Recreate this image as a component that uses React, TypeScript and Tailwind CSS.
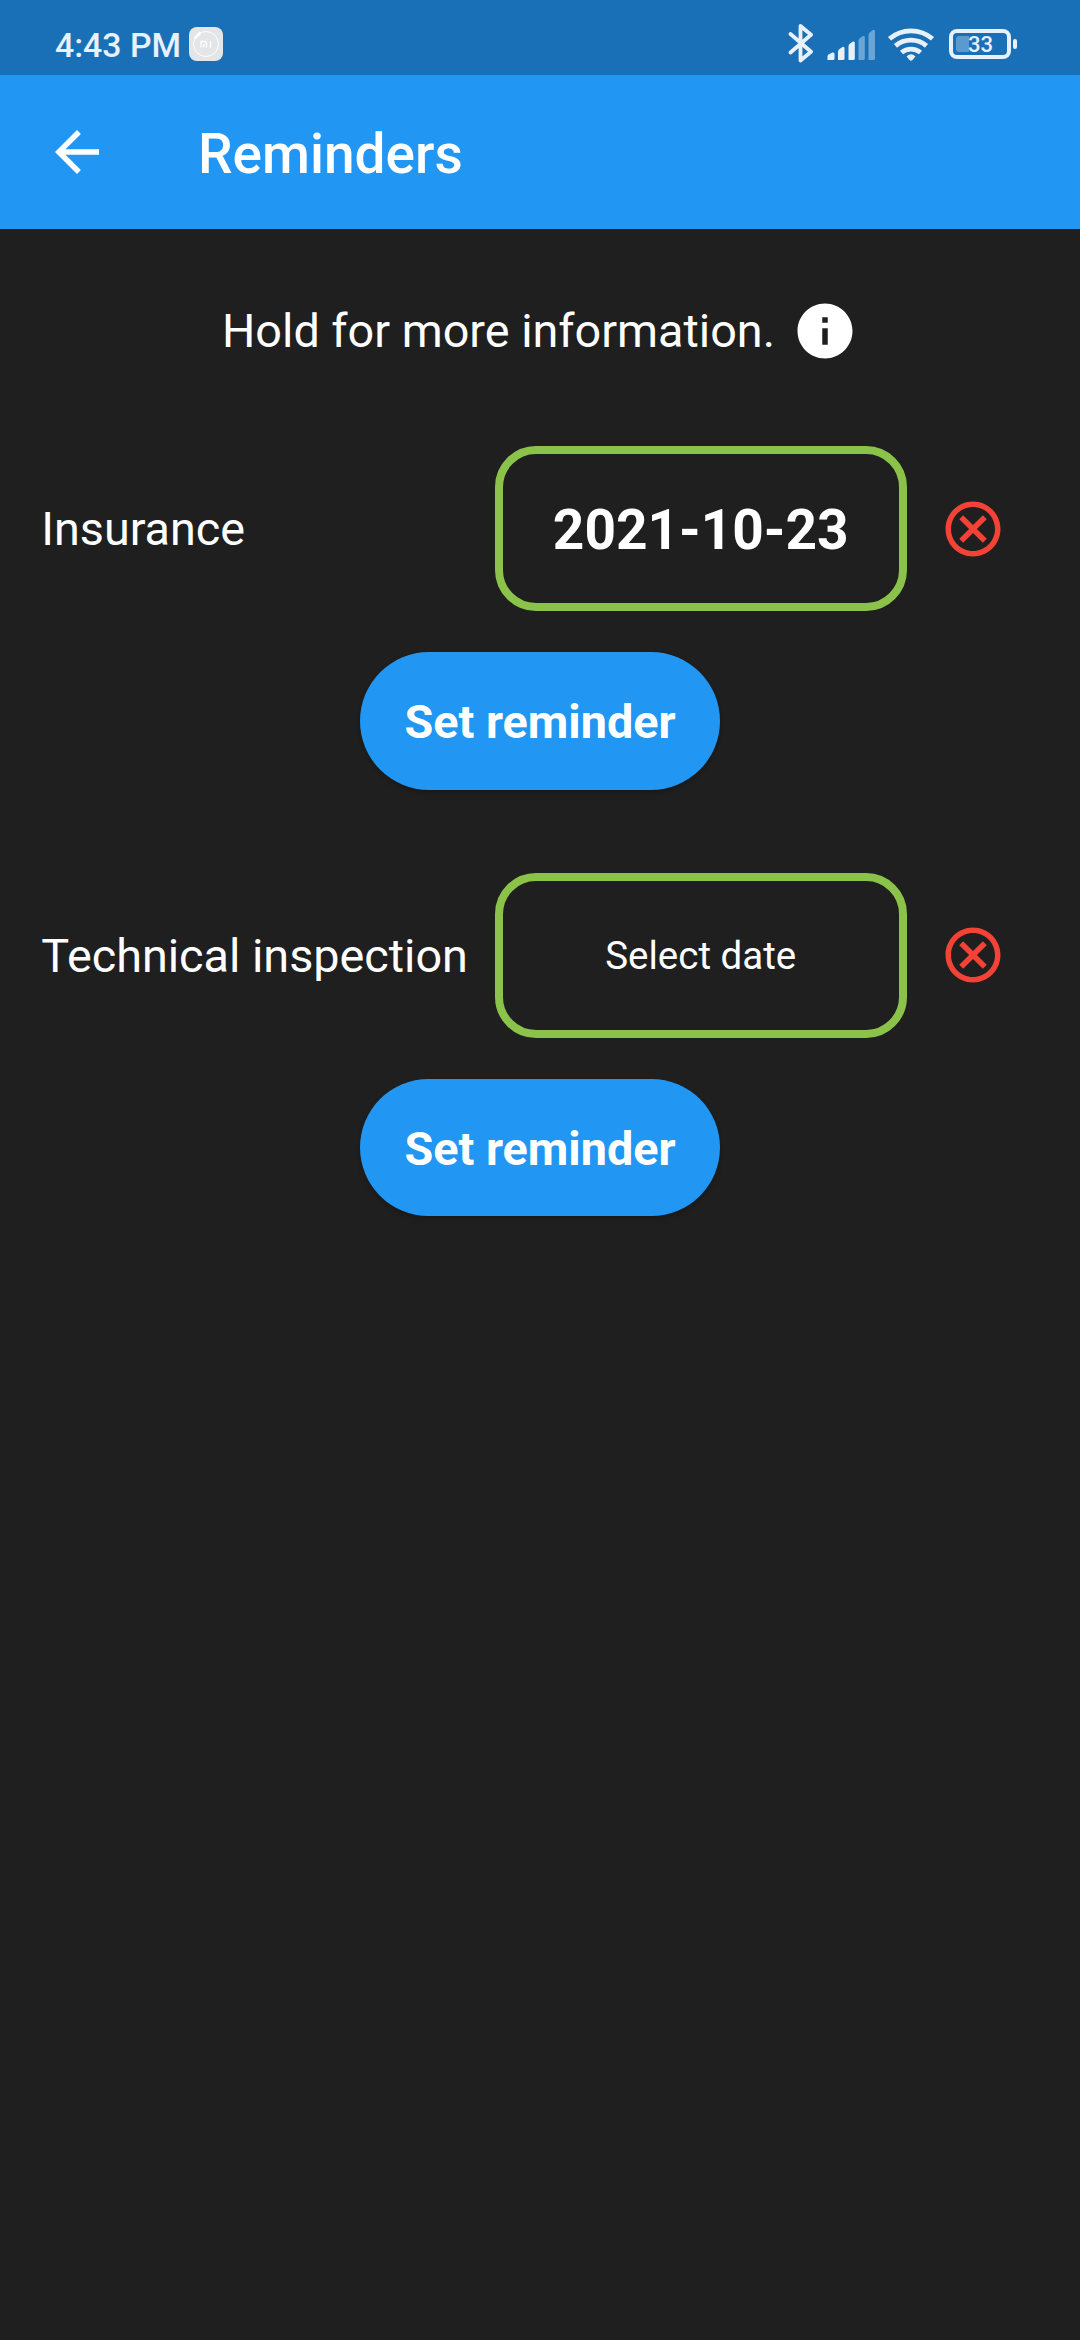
import { MdArrowBack, MdInfo, MdOutlineCancel } from "react-icons/md";

function BluetoothIcon() {
  return (
    <svg className="h-[40px] w-[26px]" viewBox="0 0 26 40" fill="none" stroke="#e8f1fa" strokeWidth="3.8" strokeLinejoin="round" strokeLinecap="round">
      <path d="M3.5 11 24 28.800 13.500 37.500V3L24 11.800 3.500 29.500" />
    </svg>
  );
}

function SignalIcon() {
  return (
    <svg className="h-[32px] w-[50px]" viewBox="0 0 50 32">
      <g fill="#e8f1fa">
        <path d="M1.5 31V27.5Q1.5 26 3 25.2L6.5 23.5Q8.5 23 8.5 25V29.500Q8.500 31 7 31Z" />
        <path d="M12 31V22.500Q12 21 13.500 20L16.500 18Q18.500 17 18.500 19.500V29.500Q18.500 31 17 31Z" />
        <path d="M22.500 31V17.500Q22.500 15.500 24 14.500L27 12.500Q28.800 12 28.800 14V29.500Q28.800 31 27.300 31Z" />
      </g>
      <g fill="#6ba5d5">
        <path d="M32.500 31V11.500Q32.500 10 34 9L37 7Q38.800 6 38.800 8.500V29.500Q38.800 31 37.300 31Z" />
        <path d="M42.500 31V6Q42.500 4.300 44 3.200L47 1Q49 0 49 2.500V29.500Q49 31 47.500 31Z" />
      </g>
    </svg>
  );
}

function WifiIcon() {
  return (
    <svg className="h-[36px] w-[48px]" viewBox="0 0 48 36" fill="none" stroke="#e8f1fa" strokeWidth="4.800">
      <path d="M2.500 12.800A33 33 0 0 1 45.500 12.800" />
      <path d="M8.500 19.900A24 24 0 0 1 39.500 19.900" />
      <path d="M14.500 26.500A15 15 0 0 1 33.500 26.500" />
      <path d="M19.500 30.500Q24 26 28.500 30.500L25.500 34Q24 35.500 22.500 34Z" fill="#e8f1fa" stroke="none" />
    </svg>
  );
}

function StatusBar() {
  return (
    <div className="flex h-[75px] items-start bg-[#1a70b7] text-[#e8f1fa]">
      <div className="ml-[55px] mt-[26px] w-[128px] whitespace-nowrap text-[33.800px] font-medium leading-[40px]">4:43 PM</div>
      <svg className="ml-[6px] mt-[27px] h-[34px] w-[34px]" viewBox="0 0 34 34">
        <rect width="34" height="34" rx="8" fill="#e4e5e7" />
        <circle cx="17" cy="17" r="12.500" fill="none" stroke="#fff" strokeWidth="1" />
        <path d="M6.500 10.500 10.500 6.500" stroke="#fff" strokeWidth="3" strokeLinecap="round" />
        <path d="M12 20.500V14.500H15.500Q17.500 14.500 17.500 16.500V20.500M14.800 17V20.500M21.500 14V20.500" fill="none" stroke="#fff" strokeWidth="1.300" />
      </svg>
      <div className="ml-[564px] mt-[23px]"><BluetoothIcon /></div>
      <div className="ml-[13px] mt-[29px]"><SignalIcon /></div>
      <div className="ml-[11px] mt-[26px]"><WifiIcon /></div>
      <div className="ml-[14px] mt-[29px] flex items-center gap-[2px]">
        <div className="flex h-[30px] w-[62px] items-center rounded-[8px] border-[4px] border-[#e8f1fa] pl-[3px]">
          <div className="h-[16px] w-[13px] rounded-l-[3px] bg-[#5c99cf]" />
          <div className="-ml-px pt-[2px] text-[22px] font-medium leading-[22px]">33</div>
        </div>
        <div className="h-[10px] w-[4px] rounded-[2px] bg-[#e8f1fa]" />
      </div>
    </div>
  );
}

function Reminder({ label, date }: { label: string; date?: string }) {
  return (
    <section className="flex flex-col items-center">
      <div className="flex h-[165px] w-full items-center">
        <div className="w-[453px] whitespace-nowrap pt-[2px] pl-[41.250px] text-[46.750px] leading-[55px]">{label}</div>
        <button className="ml-[41.500px] flex h-[165px] w-[412.500px] items-center justify-center rounded-[41px] border-8 border-[#8bc34a]">
          {date ? <span className="pt-[3px] text-[55px] font-bold leading-[64px]">{date}</span> : <span className="pt-px text-[38.500px] leading-[45px]">Select date</span>}
        </button>
        <button className="ml-[32.500px] text-[#f44336]"><MdOutlineCancel className="size-[66px]" /></button>
      </div>
      <button className="mt-[41.250px] h-[137.500px] w-[360px] rounded-full bg-[#2196f3] pt-[3px] text-[46.750px] font-bold leading-[55px] shadow-[0_3px_5px_rgba(0,0,0,0.2)]">
        Set reminder
      </button>
    </section>
  );
}

export default function App() {
  return (
    <div className="min-h-[2340px] w-[1080px] bg-[#1f1f1f] font-['Roboto',sans-serif] text-white">
      <StatusBar />
      <header className="flex h-[154px] items-center bg-[#2196f3]">
        <MdArrowBack className="ml-[44px] size-[66px]" />
        <h1 className="ml-[88px] pt-[3px] text-[55px] font-medium leading-[64px]">Reminders</h1>
      </header>
      <main className="flex flex-col">
        <div className="mt-[69px] flex h-[66px] items-center pl-[222px]">
          <p className="w-[570px] whitespace-nowrap text-[46.750px] leading-[55px]">Hold for more information.</p>
          <MdInfo className="size-[66px]" />
        </div>
        <div className="mt-[82px] flex flex-col gap-[82.800px]">
          <Reminder label="Insurance" date="2021-10-23" />
          <Reminder label="Technical inspection" />
        </div>
      </main>
    </div>
  );
}
